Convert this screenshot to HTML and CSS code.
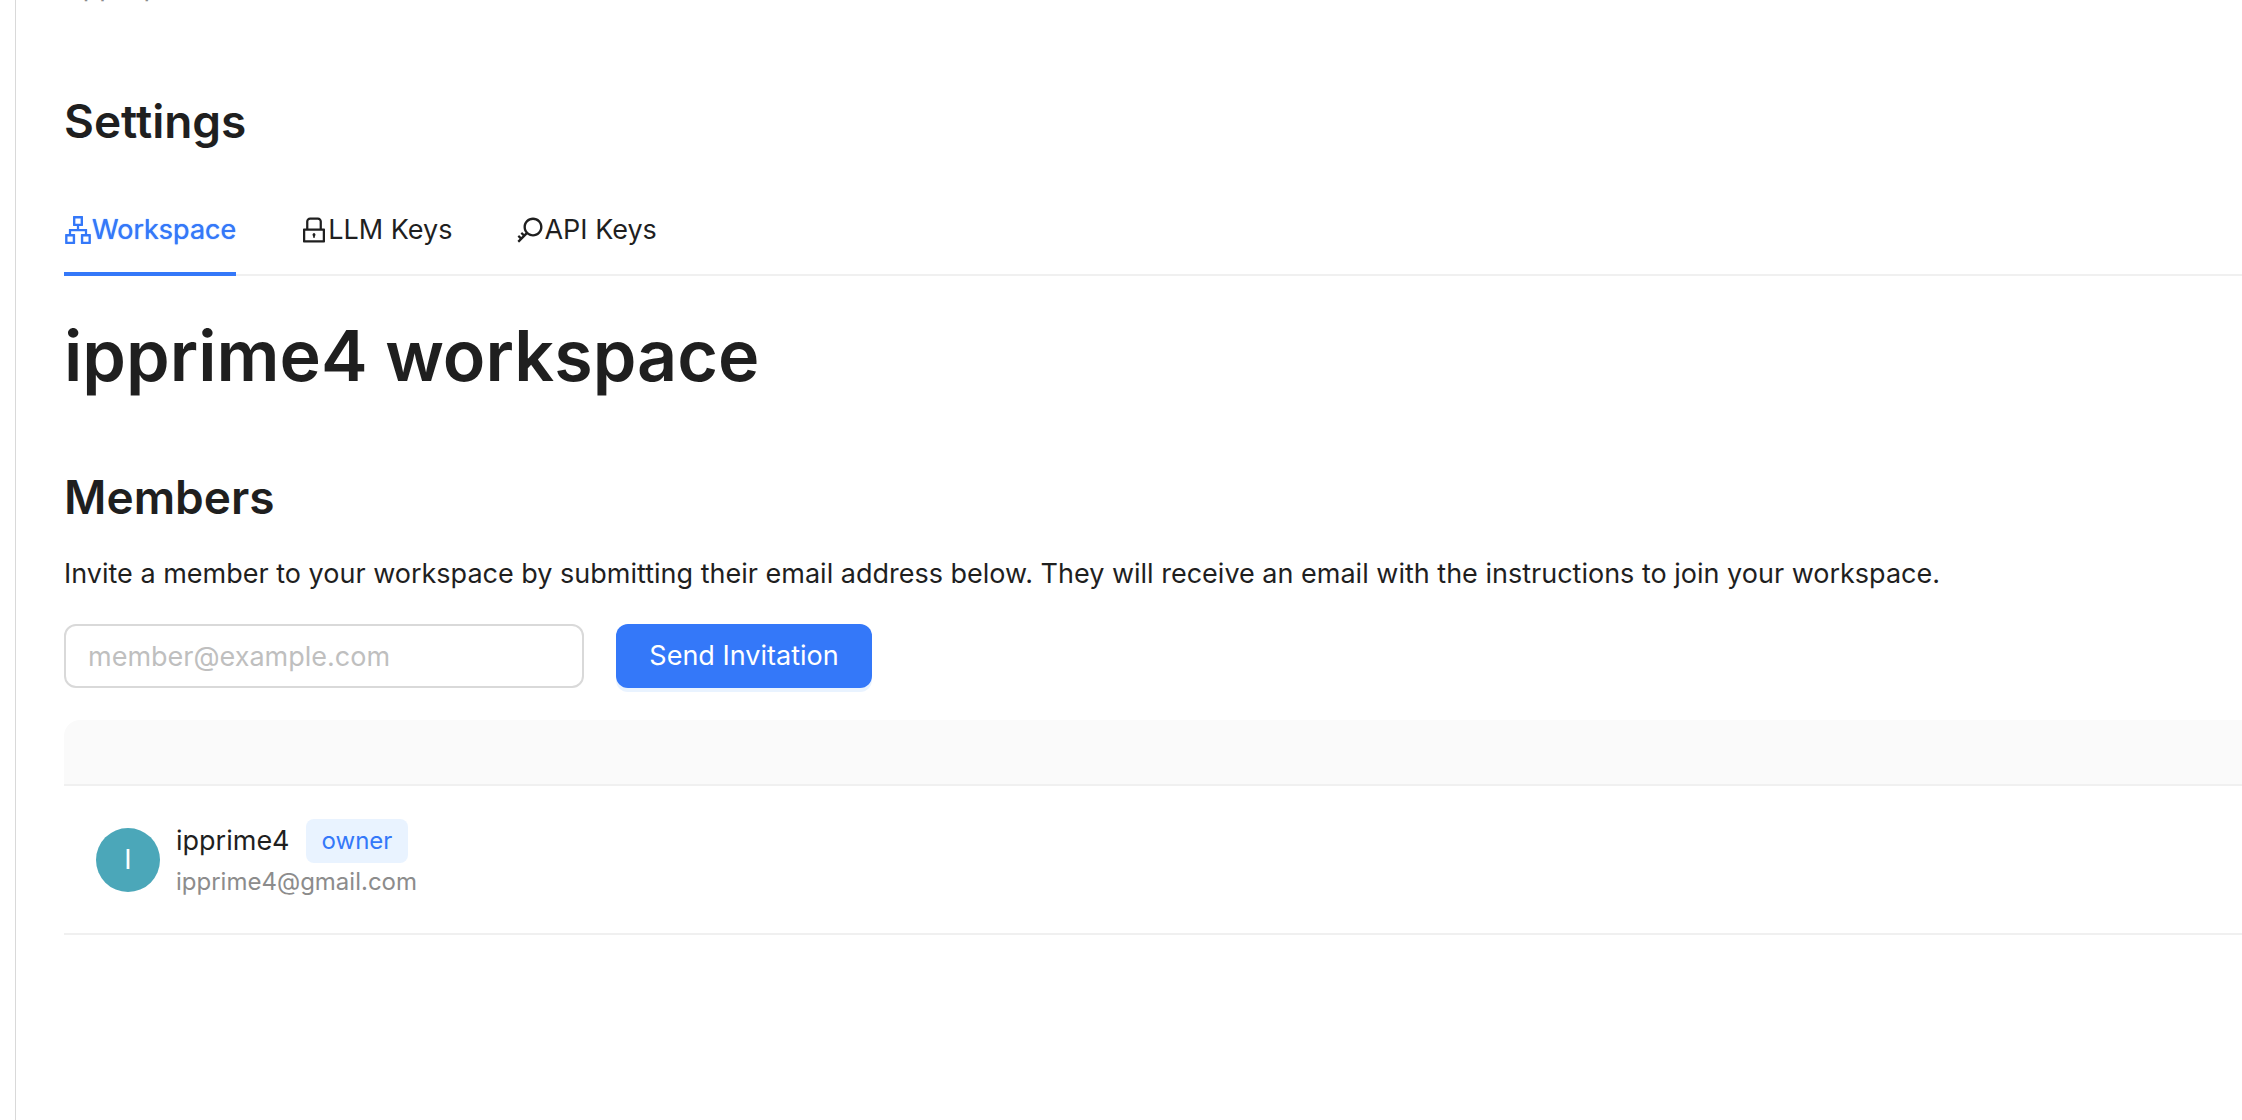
FILE: index.html
```html
<!DOCTYPE html>
<html lang="en">
<head>
<meta charset="utf-8">
<title>Settings</title>
<link rel="stylesheet" href="styles.css">
</head>
<body>
<div class="layout">
  <main class="content">
    <nav class="breadcrumb" aria-label="Breadcrumb"><a href="#">App Up</a></nav>
    <h2 class="page-title">Settings</h2>
    <div class="tabs" role="tablist">
      <button class="tab tab-active" role="tab" aria-selected="true">
        <svg class="icon" viewBox="64 64 896 896" aria-hidden="true"><path d="M908 640H804V488c0-4.400-3.600-8-8-8H548v-96h108c8.800 0 16-7.200 16-16V80c0-8.800-7.200-16-16-16H368c-8.800 0-16 7.200-16 16v288c0 8.800 7.200 16 16 16h108v96H228c-4.400 0-8 3.600-8 8v152H116c-8.800 0-16 7.200-16 16v288c0 8.800 7.200 16 16 16h288c8.800 0 16-7.200 16-16V656c0-8.800-7.200-16-16-16H292v-88h440v88H620c-8.800 0-16 7.200-16 16v288c0 8.800 7.200 16 16 16h288c8.800 0 16-7.200 16-16V656c0-8.800-7.200-16-16-16zm-564 76v168H176V716h168zm84-408V140h168v168H428zm420 576H680V716h168v168z"/></svg>Workspace</button>
      <button class="tab" role="tab" aria-selected="false">
        <svg class="icon" viewBox="64 64 896 896" aria-hidden="true"><path d="M832 464h-68V240c0-70.700-57.300-128-128-128H388c-70.700 0-128 57.300-128 128v224h-68c-17.700 0-32 14.300-32 32v384c0 17.700 14.300 32 32 32h640c17.700 0 32-14.300 32-32V496c0-17.700-14.300-32-32-32zM332 240c0-30.900 25.100-56 56-56h248c30.900 0 56 25.100 56 56v224H332V240zm460 600H232V536h560v304zM484 701v53c0 4.400 3.600 8 8 8h40c4.400 0 8-3.600 8-8v-53a48.010 48.010 0 10-56 0z"/></svg>LLM Keys</button>
      <button class="tab" role="tab" aria-selected="false">
        <svg class="icon" viewBox="64 64 896 896" aria-hidden="true"><path d="M608 112c-167.900 0-304 136.100-304 304 0 70.300 23.900 135 63.900 186.500l-41.100 41.100-62.300-62.300a8.150 8.150 0 00-11.400 0l-39.800 39.800a8.150 8.150 0 000 11.400l62.300 62.300-44.900 44.900-62.300-62.300a8.150 8.150 0 00-11.400 0l-39.800 39.800a8.150 8.150 0 000 11.400l62.300 62.300-65.300 65.300a8.030 8.030 0 000 11.300l42.300 42.300c3.100 3.100 8.200 3.100 11.300 0l253.600-253.600A304.060 304.060 0 00608 720c167.900 0 304-136.100 304-304S775.900 112 608 112zm161.200 465.200C726.200 620.300 668.900 644 608 644c-60.900 0-118.200-23.700-161.200-66.800-43.100-43-66.800-100.300-66.800-161.200 0-60.900 23.700-118.200 66.800-161.200 43-43.100 100.300-66.800 161.200-66.800 60.900 0 118.200 23.700 161.200 66.800 43.100 43 66.800 100.300 66.800 161.200 0 60.900-23.700 118.200-66.800 161.200z"/></svg>API Keys</button>
    </div>
    <h1 class="workspace-title">ipprime4 workspace</h1>
    <h2 class="section-title">Members</h2>
    <p class="lead">Invite a member to your workspace by submitting their email address below. They will receive an email with the instructions to join your workspace.</p>
    <form class="invite">
      <input class="email" type="email" placeholder="member@example.com" aria-label="Member email">
      <button class="submit" type="button">Send Invitation</button>
    </form>
    <table class="members">
      <thead><tr><th aria-label="Member"></th></tr></thead>
      <tbody><tr><td>
        <div class="member">
          <span class="avatar">I</span>
          <div class="details">
            <div class="name-row"><span>ipprime4</span><span class="tag">owner</span></div>
            <div class="address">ipprime4@gmail.com</div>
          </div>
        </div>
      </td></tr></tbody>
    </table>
  </main>
</div>
</body>
</html>
```
FILE: styles.css
```css
* { box-sizing: border-box; }
body {
  margin: 0;
  background: #fff;
  color: #1f1f1f;
  font: 27px/44px Inter, "Liberation Sans", sans-serif;
}
h1, h2, p { margin: 0; }
button, input { font: inherit; }
.layout { display: flex; min-height: 100vh; overflow: hidden; padding-left: 15px; }
.content { flex: 1; min-width: 0; border-left: 1px solid #d9d9d9; padding-left: 48px; }
.breadcrumb { margin-top: -35px; }
.breadcrumb a { color: #8c8c8c; text-decoration: none; }
.page-title, .section-title { font-size: 46px; line-height: 64px; font-weight: 600; }
.page-title { margin-top: 80px; }
.tabs { display: flex; gap: 64px; margin-top: 31px; border-bottom: 2px solid #f0f0f0; }
.tab {
  display: flex;
  align-items: center;
  margin: 0 0 -2px;
  padding: 24px 0 20px;
  border: 0;
  border-bottom: 4px solid transparent;
  background: none;
  color: #1f1f1f;
}
.tab-active { color: #3478f9; border-color: #3478f9; text-shadow: 0 0 1px currentColor; }
.icon { width: 28px; height: 28px; fill: currentColor; }
.workspace-title { margin-top: 34px; font-size: 70px; line-height: 92px; font-weight: 600; }
.section-title { margin-top: 63px; }
.lead { margin-top: 23px; }
.invite { display: flex; gap: 32px; margin-top: 28px; }
.email {
  width: 520px;
  height: 64px;
  padding: 0 22px;
  border: 2px solid #d9d9d9;
  border-radius: 12px;
  background: #fff;
  color: #1f1f1f;
}
.email::placeholder { color: #bfbfbf; }
.submit {
  min-width: 256px;
  height: 64px;
  padding: 0 32px;
  border: 0;
  border-radius: 12px;
  background: #3478f9;
  color: #fff;
  box-shadow: 0 4px 0 #e9f3ff;
}
.members { width: 100%; margin-top: 32px; border-collapse: separate; border-spacing: 0; }
.members th { height: 66px; padding: 0; background: #fafafa; border-bottom: 2px solid #f0f0f0; border-top-left-radius: 16px; }
.members td { padding: 33px 32px 32px; border-bottom: 2px solid #f0f0f0; }
.member { display: flex; align-items: center; gap: 16px; }
.avatar { width: 64px; height: 64px; border-radius: 50%; background: #4ba7b9; color: #fff; line-height: 64px; text-align: center; }
.name-row { display: flex; align-items: center; gap: 16px; }
.tag { padding: 0 16px; border-radius: 8px; background: #e9f3ff; color: #3478f9; font-size: 24px; }
.address { color: #8c8c8c; font-size: 24px; line-height: 38px; }
```
